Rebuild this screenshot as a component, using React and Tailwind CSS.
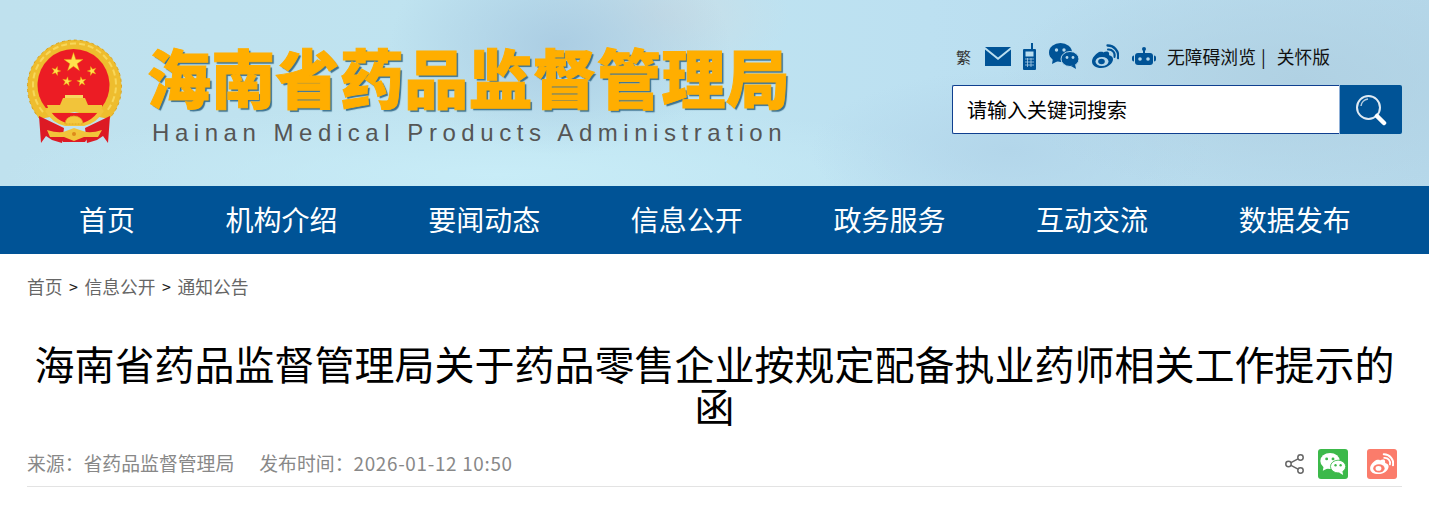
const CJK = "font-['Noto_Sans_CJK_SC','Liberation_Sans',sans-serif]";

function Star({ cx, cy, r, rot = 0 }) {
  const pts = [];
  for (let i = 0; i < 10; i++) {
    const rad = i % 2 === 0 ? r : r * 0.382;
    const a = (Math.PI / 5) * i - Math.PI / 2 + rot;
    pts.push(`${(cx + rad * Math.cos(a)).toFixed(2)},${(cy + rad * Math.sin(a)).toFixed(2)}`);
  }
  return <polygon points={pts.join(" ")} fill="#ffe14d" stroke="#e8a800" strokeWidth="0.4" />;
}

function Emblem() {
  return (
    <svg width="96" height="106" viewBox="27 39 96 106" className="shrink-0">
      <path d="M40 119A47 47 0 1 1 109 119L74.500 112Z" fill="#eebd2e" />
      <path d="M40 119A47 47 0 1 1 109 119" fill="none" stroke="#d9a21e" strokeWidth="1" strokeDasharray="3 3" />
      <path d="M43 112A41.500 41.500 0 1 1 106 112" fill="none" stroke="#f8d75a" strokeWidth="2" strokeDasharray="6 3" />
      <path d="M45.800 108A36 36 0 1 1 101.200 108Z" fill="#ec1c24" />
      <Star cx={73.500} cy={62.500} r={10} />
      <Star cx={56} cy={71} r={4.800} rot={0.3} />
      <Star cx={92} cy={71} r={4.800} rot={-0.3} />
      <Star cx={67} cy={81.500} r={4.800} rot={0.15} />
      <Star cx={81.500} cy={81.500} r={4.800} rot={-0.15} />
      <path d="M63 98h22l3 7H60z" fill="#f2c43a" />
      <path d="M65 95h18v3H65z" fill="#f7d860" />
      <path d="M39 116l25 12-2 15-10-3-6-4-5 7z" fill="#dd1a24" />
      <path d="M110 116l-25 12 2 15 10-3 6-4 5 7z" fill="#dd1a24" />
      <path d="M58 135h32l-5 7H63z" fill="#dd1a24" />
      <path d="M50 113h49q-6 8-15 11H65q-9-3-15-11z" fill="#ec1c24" />
      <path d="M47 105h55v3h-1l3 3q-7 12-20 15H65q-13-3-20-15l3-3z M51 112q6 8 15 11h17q9-3 15-11z" fillRule="evenodd" fill="#f2c43a" />
      <path d="M65 124a9 8 0 0 1 18 0z" fill="#f4c93f" stroke="#e0a420" strokeWidth="1" strokeDasharray="2 1" />
      <path d="M47 130q13 4 19 1l8-3 9 3q7 3 19-1l-4 7H84l-10 4-10-4H50z" fill="#f2c43a" />
      <circle cx="74" cy="134" r="2" fill="#dd8a1a" />
    </svg>
  );
}

const BLUE = "#005396";

function Mail() {
  return (
    <svg width="26" height="19" viewBox="0 0 26 19">
      <path d="M0 0h26L13 10.500z" fill={BLUE} />
      <path d="M0 2.500v16.500h26V2.500L13 13z" fill={BLUE} />
    </svg>
  );
}

function Phone() {
  return (
    <svg width="13" height="27" viewBox="0 0 13 27">
      <path d="M8 0h2v6H8z" fill={BLUE} />
      <path fillRule="evenodd" d="M1 6h11a1 1 0 0 1 1 1v19a1 1 0 0 1-1 1H1a1 1 0 0 1-1-1V7a1 1 0 0 1 1-1zM2.500 8.500v5h8v-5z" fill={BLUE} />
      <path d="M2 16h9M2 19h9M2 22h9M4.500 15v9M8 15v9" stroke="#a9cde4" strokeWidth="0.8" />
    </svg>
  );
}

function Wechat() {
  return (
    <svg width="30" height="26" viewBox="0 0 30 26">
      <ellipse cx="11.500" cy="9.500" rx="11.500" ry="9.500" fill={BLUE} />
      <path d="M4 15l-1 6 6-3z" fill={BLUE} />
      <ellipse cx="21" cy="16" rx="9" ry="7.500" stroke="#b5d7ea" strokeWidth="1" fill={BLUE} />
      <path d="M26 21l1 5-5-3z" fill={BLUE} />
      <circle cx="7.500" cy="7" r="1.700" fill="#b5d7ea" />
      <circle cx="15" cy="7" r="1.700" fill="#b5d7ea" />
      <circle cx="18" cy="14.500" r="1.400" fill="#b5d7ea" />
      <circle cx="24" cy="14.500" r="1.400" fill="#b5d7ea" />
    </svg>
  );
}

function Weibo({ color = BLUE, hole = "#b5d7ea", w = 27, h = 25 }) {
  return (
    <svg width={w} height={h} viewBox="0 0 27 25">
      <path fillRule="evenodd" d="M11 8.500c3-1.500 5.500-1.500 6 .5.300 1-.2 2 .3 2.300 3 .8 3.700 2.500 3.700 4 0 4-5 8.700-12 8.700-5 0-9-2.500-9-6.500 0-3.500 3-7 7-9.500 1.500-.5 3-.5 4 0z" fill={color} />
      <ellipse cx="10" cy="17.500" rx="6.500" ry="4.600" fill={hole} />
      <ellipse cx="9.500" cy="17.500" rx="3.300" ry="2.700" fill={color} />
      <path d="M16 5.500a6 6 0 0 1 6.500 7.500" fill="none" stroke={color} strokeWidth="2" strokeLinecap="round" />
      <path d="M15.500 1.500a10.500 10.500 0 0 1 10.500 12.500" fill="none" stroke={color} strokeWidth="2.300" strokeLinecap="round" />
    </svg>
  );
}

function Robot() {
  return (
    <svg width="24" height="18" viewBox="0 0 24 18">
      <circle cx="12" cy="2" r="2" fill={BLUE} />
      <path d="M11 3h2v4h-2z" fill={BLUE} />
      <path d="M6 6h12a3 3 0 0 1 3 3v6a3 3 0 0 1-3 3H6a3 3 0 0 1-3-3V9a3 3 0 0 1 3-3z" fill={BLUE} />
      <path d="M0 10.500a2 2 0 0 1 2-2v6a2 2 0 0 1-2-2zM24 10.500a2 2 0 0 0-2-2v6a2 2 0 0 0 2-2z" fill={BLUE} />
      <circle cx="8" cy="12" r="1.800" fill="#b5d7ea" />
      <circle cx="16" cy="12" r="1.800" fill="#b5d7ea" />
    </svg>
  );
}

function SearchIcon() {
  return (
    <svg width="32" height="32" viewBox="0 0 32 32">
      <circle cx="13.500" cy="13.500" r="11.500" fill="none" stroke="#dfeaf3" strokeWidth="2" />
      <path d="M6 12a8 8 0 0 1 7-7" fill="none" stroke="#fff" strokeWidth="1.500" opacity="0.7" />
      <path d="M22 22l7 7" stroke="#fff" strokeWidth="4.500" strokeLinecap="round" />
    </svg>
  );
}

function Share() {
  return (
    <svg width="19" height="20" viewBox="0 0 19 20" fill="none" stroke="#666" strokeWidth="1.500">
      <circle cx="15.500" cy="3.500" r="2.700" />
      <circle cx="3.500" cy="10" r="2.700" />
      <circle cx="15.500" cy="16.500" r="2.700" />
      <path d="M6 8.600l7-3.800M6 11.400l7 3.800" />
    </svg>
  );
}

function WechatWhite() {
  return (
    <svg width="26" height="22" viewBox="0 0 30 26">
      <ellipse cx="11.500" cy="9.500" rx="11.500" ry="9.500" fill="#fff" />
      <path d="M4 15l-1 6 6-3z" fill="#fff" />
      <ellipse cx="21" cy="16" rx="9" ry="7.500" stroke="#3cb94a" strokeWidth="1" fill="#fff" />
      <path d="M26 21l1 5-5-3z" fill="#fff" />
      <circle cx="7.500" cy="7" r="1.700" fill="#3cb94a" />
      <circle cx="15" cy="7" r="1.700" fill="#3cb94a" />
      <circle cx="18" cy="14.500" r="1.400" fill="#3cb94a" />
      <circle cx="24" cy="14.500" r="1.400" fill="#3cb94a" />
    </svg>
  );
}

const NAV = ["首页", "机构介绍", "要闻动态", "信息公开", "政务服务", "互动交流", "数据发布"];

export default function App() {
  return (
    <div className={`w-[1429px] h-[514px] overflow-hidden bg-white ${CJK}`}>
      <header className="h-[186px] flex justify-between pl-[27px] pr-[27px] bg-[radial-gradient(ellipse_170px_110px_at_560px_45px,#abcde3,transparent),radial-gradient(ellipse_130px_70px_at_660px_15px,#c9dde6,transparent),radial-gradient(ellipse_300px_120px_at_1300px_80px,#b0d1e3,transparent),radial-gradient(ellipse_200px_80px_at_1010px_150px,#b3d6ea,transparent),radial-gradient(ellipse_500px_70px_at_500px_175px,#c8ecf7,transparent),linear-gradient(90deg,#bfe1ee,#bfe4f1_45%,#bce0f1_65%,#b6d8ea)]">
        <div className="flex items-start">
          <div className="mt-[39px]"><Emblem /></div>
          <div className="ml-[24px] mt-[31px] flex flex-col">
            <h1 className="text-[64px] leading-[88px] font-black tracking-[0.3px] text-[#ffae00] whitespace-nowrap [-webkit-text-stroke:1px_#ffae00] [text-shadow:2px_2px_1px_#3e7390]">海南省药品监督管理局</h1>
            <p className="mt-0 ml-[5px] text-[24px] leading-[28px] tracking-[5.55px] text-[#555] whitespace-nowrap font-['Liberation_Sans',sans-serif]">Hainan Medical Products Administration</p>
          </div>
        </div>
        <div className="w-[450px] flex flex-col mt-[42px]">
          <div className="h-[28px] flex items-center pl-[4px] text-[17.8px] text-[#111]">
            <span className="text-[15px] text-[#333] w-[29px] leading-none">繁</span>
            <Mail />
            <span className="ml-[12px]"><Phone /></span>
            <span className="ml-[13px]"><Wechat /></span>
            <span className="ml-[13px]"><Weibo /></span>
            <span className="ml-[13px]"><Robot /></span>
            <span className="ml-[11px] whitespace-nowrap">无障碍浏览</span>
            <span className="ml-[5px]">|</span>
            <span className="ml-[11px] whitespace-nowrap">关怀版</span>
          </div>
          <div className="mt-[15px] h-[49px] flex">
            <div className="w-[387px] flex items-center bg-white border border-[#0f3f8f] border-r-0 rounded-l-[2px] pl-[14px] text-[20px] text-black">请输入关键词搜索</div>
            <div className="w-[63px] flex items-center justify-center bg-[#005396] rounded-r-[2px] border-l border-[#8fb0d8]"><SearchIcon /></div>
          </div>
        </div>
      </header>

      <nav className="h-[68px] pb-[2px] bg-[#005396] flex items-center pl-[79px] gap-[90.6px] text-[28px] text-white whitespace-nowrap">
        {NAV.map((n) => <a key={n}>{n}</a>)}
      </nav>

      <main className="px-[27px]">
        <div className="mt-[20px] h-[24px] flex items-center text-[17.8px] text-[#666] whitespace-nowrap">
          <span>首页</span>
          <span className="mx-[6.5px] text-[#222] text-[16px]">&gt;</span>
          <span>信息公开</span>
          <span className="mx-[6.5px] text-[#222] text-[16px]">&gt;</span>
          <span>通知公告</span>
        </div>

        <h2 className="mt-[44px] -mx-[1px] text-center text-[40px] leading-[42px] text-black">海南省药品监督管理局关于药品零售企业按规定配备执业药师相关工作提示的函</h2>

        <div className="mt-[19px] h-[42px] pb-[4px] flex items-center justify-between border-b border-[#e3e3e3] text-[18.85px] text-[#888]">
          <div className="flex whitespace-nowrap">
            <span>{"来源\uFF1A省药品监督管理局"}</span>
            <span className="ml-[25px]">{"发布时间\uFF1A"}<span className="tracking-[0.7px]">2026-01-12 10:50</span></span>
          </div>
          <div className="flex items-center pr-[5px]">
            <span className="mt-[1px] flex"><Share /></span>
            <span className="ml-[14px] mt-[1px] w-[30px] h-[30px] rounded-[3px] bg-[#3cb94a] flex items-center justify-center"><WechatWhite /></span>
            <span className="ml-[19px] mt-[1px] w-[30px] h-[30px] rounded-[3px] bg-[#fb7c6b] flex items-center justify-center"><Weibo color="#fff" hole="#fb7c6b" w={24} h={22} /></span>
          </div>
        </div>
      </main>
    </div>
  );
}
